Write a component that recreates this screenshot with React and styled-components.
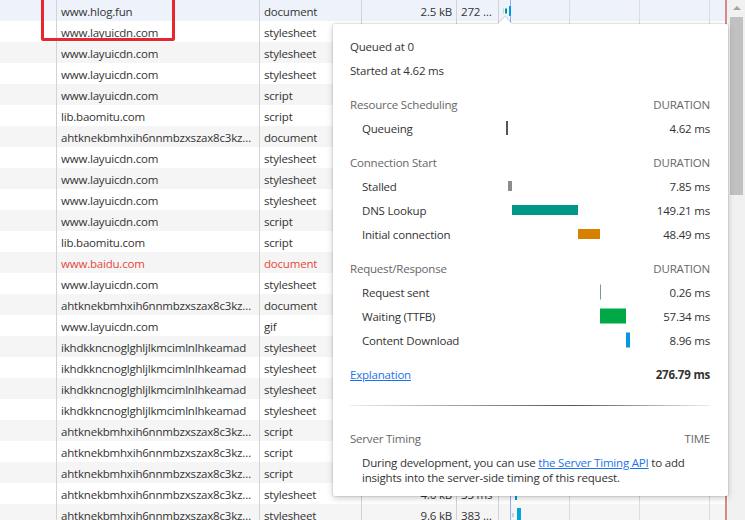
import React from 'react';
import styled, { createGlobalStyle } from 'styled-components';

const GlobalStyle = createGlobalStyle`
  html, body {
    margin: 0;
    padding: 0;
    background: #fff;
    overflow: hidden;
  }

  body {
    font-family: 'Open Sans', 'Noto Sans', sans-serif;
    font-size: 11.5px;
    letter-spacing: -0.2px;
    color: #333;
  }
`;

const Page = styled.div`
  position: relative;
  display: flex;
  width: 745px;
  height: 520px;
  overflow: hidden;
`;

const Table = styled.div`
  flex: 1;
  display: flex;
  flex-direction: column;
`;

const Row = styled.div`
  display: grid;
  grid-template-columns: 56px 203px 102px 95px 42px 230px;
  height: 21px;
  flex-shrink: 0;
  background: ${p => (p.$selected ? '#eef3fb' : p.$stripe ? '#f5f5f5' : '#fff')};
  color: ${p => (p.$error ? '#e8453c' : '#333')};
`;

const Cell = styled.div`
  display: flex;
  align-items: center;
  box-sizing: border-box;
  padding: 2px 4px 0;
  border-left: ${p => (p.$first ? 'none' : '1px solid #d3d3d3')};
  justify-content: ${p => (p.$right ? 'flex-end' : 'flex-start')};
  white-space: nowrap;
  overflow: hidden;
`;

const Waterfall = styled.div`
  position: relative;
  border-left: 1px solid #d3d3d3;
  background-image:
    linear-gradient(#8fb3e6, #8fb3e6),
    linear-gradient(#dedede, #dedede),
    linear-gradient(#dedede, #dedede),
    linear-gradient(#dedede, #dedede),
    linear-gradient(#d98888, #d98888);
  background-repeat: no-repeat;
  background-size: 1px 100%, 1px 100%, 1px 100%, 1px 100%, 2px 100%;
  background-position: 11px 0, 70px 0, 140px 0, 210px 0, 226px 0;
`;

const WBar = styled.span`
  position: absolute;
  top: 50%;
  transform: translateY(-50%);
  background: ${p => p.$color};
`;

const Scrollbar = styled.div`
  width: 17px;
  background: #f1f1f1;
  display: flex;
  flex-direction: column;
  align-items: center;
`;

const ScrollArrow = styled.div`
  margin-top: 6px;
  width: 0;
  height: 0;
  border-left: 4px solid transparent;
  border-right: 4px solid transparent;
  border-bottom: 4px solid #a3a3a3;
`;

const Thumb = styled.div`
  margin-top: 7px;
  width: 13px;
  height: 178px;
  background: #c1c1c1;
`;

const Highlight = styled.div`
  position: absolute;
  left: 41px;
  top: -4px;
  width: 134px;
  height: 45px;
  box-sizing: border-box;
  border: 3px solid #e8262d;
  border-radius: 2px;
`;

const Popover = styled.div`
  position: absolute;
  left: 333px;
  top: 24px;
  width: 395px;
  box-sizing: border-box;
  padding: 10px 18px 11px 17px;
  background: #fff;
  border-radius: 2px;
  box-shadow: 0 0 0 1px rgba(0, 0, 0, 0.06), 0 2px 6px rgba(0, 0, 0, 0.22);

  &::before {
    content: '';
    position: absolute;
    left: 167px;
    top: -5px;
    width: 10px;
    height: 10px;
    background: #fff;
    transform: rotate(45deg);
    box-shadow: -1px -1px 1px rgba(0, 0, 0, 0.12);
  }
`;

const Line = styled.div`
  position: relative;
  height: 24px;
  display: flex;
  align-items: center;
  justify-content: space-between;
  color: #333;
`;

const SectionHeader = styled(Line)`
  margin-top: 10px;
  color: #666;
`;

const Item = styled.div`
  display: grid;
  grid-template-columns: 144px 124px 1fr;
  align-items: center;
  height: 24px;
  padding-left: 12px;
  color: #333;
`;

const Track = styled.div`
  position: relative;
  height: 100%;
`;

const Value = styled.div`
  text-align: right;
`;

const Link = styled.a`
  color: #1a73e8;
  text-decoration: underline;
`;

const Total = styled.b`
  font-weight: 700;
  color: #333;
`;

const Divider = styled.div`
  margin-top: 19px;
  height: 1px;
  background: linear-gradient(to right, #eee, #888 40%, #555 62%, #eee 100%);
`;

const ServerHeader = styled(SectionHeader)`
  margin-top: 20px;
`;

const Note = styled.p`
  margin: 5px 0 0;
  padding-left: 12px;
  line-height: 15px;
  color: #333;
  white-space: nowrap;
`;

const LONG = 'ahtknekbmhxih6nnmbzxszax8c3kz…';
const EXT = 'ikhdkkncnoglghljlkmcimlnlhkeamad';
const CDN = 'www.layuicdn.com';
const BAOMITU = 'lib.baomitu.com';

const rows = [
  { name: 'www.hlog.fun', type: 'document', size: '2.5 kB', time: '272 …', bars: [
    { l: 4, w: 1, h: 5, c: '#cfcfcf' },
    { l: 6, w: 2, h: 5, c: '#009688' },
    { l: 10, w: 2, h: 10, c: '#0299de' },
  ] },
  { name: CDN, type: 'stylesheet', size: '1.2 kB', time: '41 ms' },
  { name: CDN, type: 'stylesheet', size: '3.4 kB', time: '52 ms' },
  { name: CDN, type: 'stylesheet', size: '1.9 kB', time: '47 ms' },
  { name: CDN, type: 'script', size: '6.1 kB', time: '63 ms' },
  { name: BAOMITU, type: 'script', size: '31.4 kB', time: '88 ms' },
  { name: LONG, type: 'document', size: '0.8 kB', time: '20 ms' },
  { name: CDN, type: 'stylesheet', size: '2.2 kB', time: '39 ms' },
  { name: CDN, type: 'stylesheet', size: '1.1 kB', time: '35 ms' },
  { name: CDN, type: 'stylesheet', size: '4.0 kB', time: '44 ms' },
  { name: CDN, type: 'script', size: '12.7 kB', time: '70 ms' },
  { name: BAOMITU, type: 'script', size: '8.3 kB', time: '58 ms' },
  { name: 'www.baidu.com', type: 'document', size: '0 B', time: '0 ms', error: true },
  { name: CDN, type: 'stylesheet', size: '2.0 kB', time: '36 ms' },
  { name: LONG, type: 'document', size: '0.6 kB', time: '18 ms' },
  { name: CDN, type: 'gif', size: '1.5 kB', time: '29 ms' },
  { name: EXT, type: 'stylesheet', size: '0 B', time: '3 ms' },
  { name: EXT, type: 'stylesheet', size: '0 B', time: '3 ms' },
  { name: EXT, type: 'stylesheet', size: '0 B', time: '2 ms' },
  { name: EXT, type: 'stylesheet', size: '0 B', time: '2 ms' },
  { name: LONG, type: 'script', size: '5.2 kB', time: '26 ms' },
  { name: LONG, type: 'script', size: '3.7 kB', time: '24 ms' },
  { name: LONG, type: 'script', size: '2.9 kB', time: '22 ms' },
  { name: LONG, type: 'stylesheet', size: '4.6 kB', time: '33 ms', bars: [
    { l: 16, w: 2, h: 12, c: '#0299de' },
  ] },
  { name: LONG, type: 'stylesheet', size: '9.6 kB', time: '383 …', bars: [
    { l: 13, w: 2, h: 4, c: '#cfcfcf' },
    { l: 18, w: 4, h: 14, c: '#00a6d6' },
  ] },
];

const TOTAL = 276.79;
const TRACK = 124;

const sections = [
  {
    title: 'Resource Scheduling',
    items: [{ label: 'Queueing', start: 0, dur: 4.62, h: 14, color: '#555', min: 2 }],
  },
  {
    title: 'Connection Start',
    items: [
      { label: 'Stalled', start: 4.62, dur: 7.85, h: 10, color: '#8c8c8c' },
      { label: 'DNS Lookup', start: 12.47, dur: 149.21, h: 10, color: '#009688' },
      { label: 'Initial connection', start: 161.68, dur: 48.49, h: 10, color: '#d68100' },
    ],
  },
  {
    title: 'Request/Response',
    items: [
      { label: 'Request sent', start: 210.17, dur: 0.26, h: 15, color: '#7a96a6', min: 1 },
      { label: 'Waiting (TTFB)', start: 210.43, dur: 57.34, h: 15, color: '#00a846' },
      { label: 'Content Download', start: 267.77, dur: 8.96, h: 15, color: '#0299de' },
    ],
  },
];

function TimingItem({ label, start, dur, h, color, min = 1 }) {
  const left = (start / TOTAL) * TRACK;
  const width = Math.max(min, (dur / TOTAL) * TRACK);
  return (
    <Item>
      <span>{label}</span>
      <Track>
        <WBar $color={color} style={{ left, width, height: h }} />
      </Track>
      <Value>{dur.toFixed(2)} ms</Value>
    </Item>
  );
}

export default function App() {
  return (
    <Page>
      <GlobalStyle />
      <Table>
        {rows.map((r, i) => (
          <Row key={i} $selected={i === 0} $stripe={i > 0 && i % 2 === 0} $error={r.error}>
            <Cell $first />
            <Cell>{r.name}</Cell>
            <Cell>{r.type}</Cell>
            <Cell $right>{r.size}</Cell>
            <Cell>{r.time}</Cell>
            <Waterfall>
              {(r.bars || []).map((b, j) => (
                <WBar key={j} $color={b.c} style={{ left: b.l, width: b.w, height: b.h }} />
              ))}
            </Waterfall>
          </Row>
        ))}
      </Table>
      <Scrollbar>
        <ScrollArrow />
        <Thumb />
      </Scrollbar>

      <Highlight />

      <Popover>
        <Line>Queued at 0</Line>
        <Line>Started at 4.62 ms</Line>
        {sections.map(s => (
          <React.Fragment key={s.title}>
            <SectionHeader>
              <span>{s.title}</span>
              <span>DURATION</span>
            </SectionHeader>
            {s.items.map(it => (
              <TimingItem key={it.label} {...it} />
            ))}
          </React.Fragment>
        ))}
        <SectionHeader>
          <Link href="#">Explanation</Link>
          <Total>276.79 ms</Total>
        </SectionHeader>
        <Divider />
        <ServerHeader>
          <span>Server Timing</span>
          <span>TIME</span>
        </ServerHeader>
        <Note>
          During development, you can use <Link href="#">the Server Timing API</Link> to add
          <br />
          insights into the server-side timing of this request.
        </Note>
      </Popover>
    </Page>
  );
}
